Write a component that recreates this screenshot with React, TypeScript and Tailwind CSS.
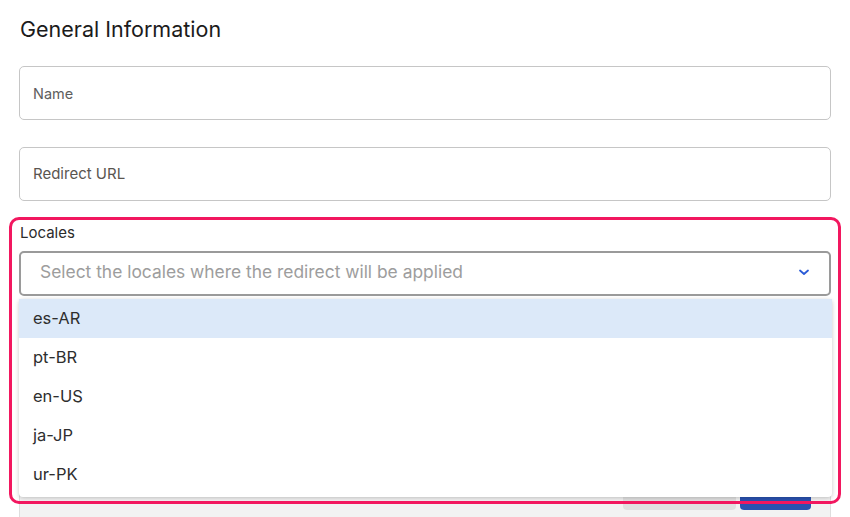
import React from "react";

const locales = ["es-AR", "pt-BR", "en-US", "ja-JP", "ur-PK"];

export default function App() {
  return (
    <div className="relative w-[850px] h-[517px] overflow-hidden bg-white font-['Inter',sans-serif]">
      <div className="flex flex-col px-[19px] pt-[15px]">
        <h2 className="text-[21.5px] leading-[28px] text-[#1b1b1b] pl-[1px]">General Information</h2>
        <div className="mt-[23px] h-[54px] border border-[#c6c6c6] rounded-[5px] flex items-center px-[13px] pt-[1px] text-[14.5px] text-[#5e5e5e]">
          Name
        </div>
        <div className="mt-[27px] h-[54px] border border-[#c6c6c6] rounded-[5px] flex items-center px-[13px] pt-[1px] text-[15px] text-[#5a5550]">
          Redirect URL
        </div>
        <div className="mt-[23px] text-[15px] leading-[18px] text-[#2b2b2b] pl-[1px]">Locales</div>
        <div className="mt-[9px] h-[45px] border-2 border-[#9a9a9a] rounded-[5px] flex items-center justify-between pl-[19px] pr-[19px] pb-[3px]">
          <span className="text-[17.4px] text-[#9d9d9d]">Select the locales where the redirect will be applied</span>
          <svg width="12" height="12" viewBox="0 0 12 12" fill="none">
            <path d="M2 4.5l4 3.5 4-3.5" stroke="#2a5bd7" strokeWidth="1.8" strokeLinecap="round" strokeLinejoin="round" />
          </svg>
        </div>
        <div className="mt-[160px] h-[80px] border border-[#dedede] bg-[#f2f2f2] flex justify-end items-start gap-[4px] pr-[19px] pt-[17px]">
          <div className="w-[113px] h-[36px] rounded-[4px] bg-[#e0e0e0]" />
          <div className="w-[71px] h-[36px] rounded-[4px] bg-[#2a52b0]" />
        </div>
      </div>

      <div className="absolute left-[19px] top-[299px] w-[813px] h-[198px] bg-white rounded-[4px] shadow-[0_1px_4px_rgba(0,0,0,0.22)] flex flex-col">
        {locales.map((l, i) => (
          <div
            key={l}
            className={
              i === 0
                ? "h-[39px] flex items-center px-[14px] pb-[1px] text-[16.5px] text-[#2e2e2e] bg-[#dce9f9]"
                : "h-[39px] flex items-center px-[14px] pb-[1px] text-[16.5px] text-[#2e2e2e]"
            }
          >
            {l}
          </div>
        ))}
      </div>

      <div className="absolute left-[9px] top-[217px] w-[832px] h-[287px] border-[3px] border-[#f2175f] rounded-[10px] pointer-events-none" />
    </div>
  );
}
